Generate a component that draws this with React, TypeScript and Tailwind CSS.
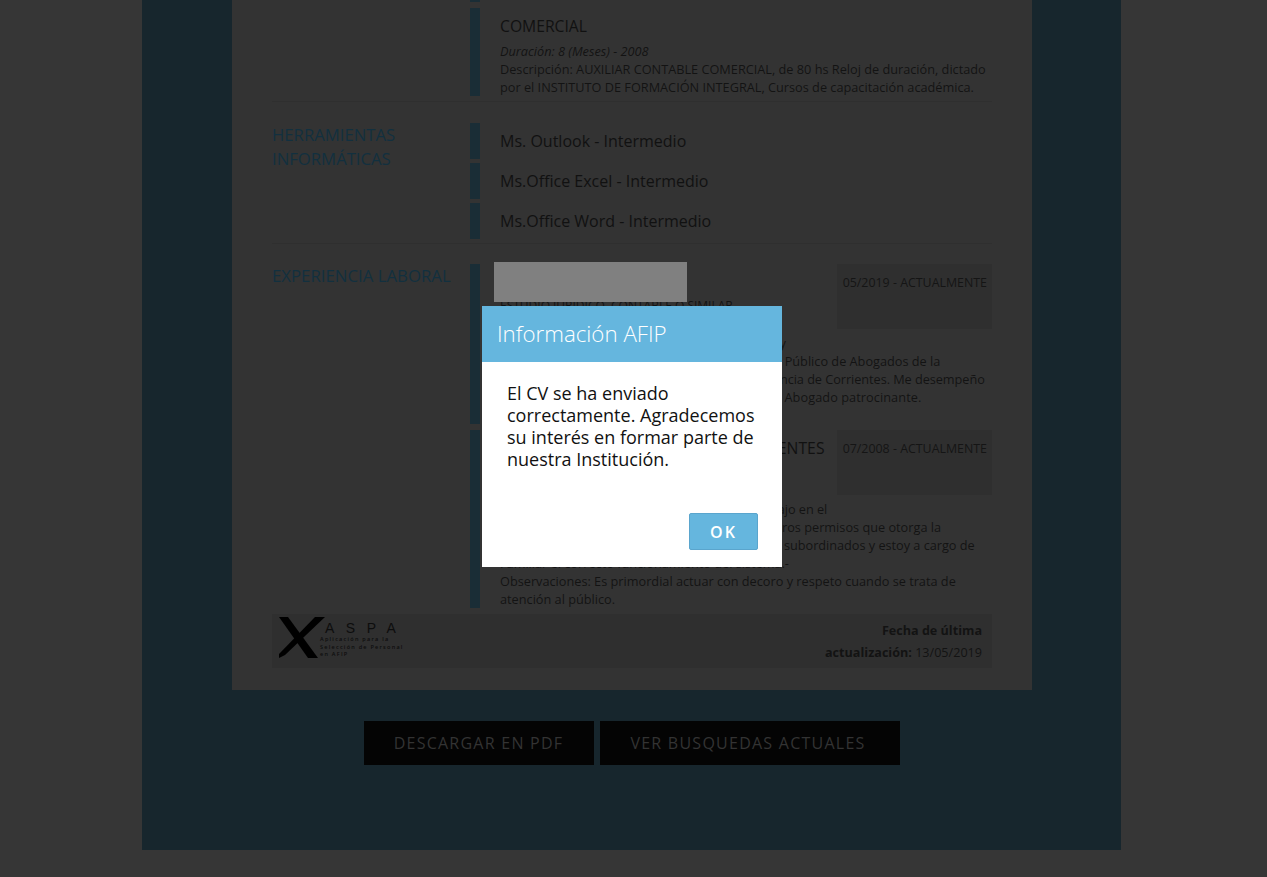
const Bar = ({ className = "" }: { className?: string }) => (
  <div className={`w-[10px] shrink-0 bg-[#1a2d36] ${className}`} />
);

const Line = ({ children, className = "" }: { children: React.ReactNode; className?: string }) => (
  <p className={`h-[18px] whitespace-nowrap text-[12.72px] leading-[18px] text-[#131313] ${className}`}>{children}</p>
);

const Tool = ({ children }: { children: React.ReactNode }) => (
  <div className="flex h-[36px]">
    <Bar />
    <p className="ml-[20px] text-[16px] leading-[36px] text-[#111111]">{children}</p>
  </div>
);

const DateBox = ({ children }: { children: React.ReactNode }) => (
  <div className="h-[65px] w-[155px] shrink-0 bg-[#2f2f2f] px-[5px] py-[10px] text-right text-[12.4px] leading-[18px] whitespace-nowrap text-[#151515]">
    {children}
  </div>
);

export default function App() {
  return (
    <div className="relative h-[877px] w-full overflow-hidden bg-[#363636] font-['Open_Sans',sans-serif]">
      <main className="ml-[142px] h-[850px] w-[979px] bg-[#17262d] px-[90px]">
        <section className="h-[690px] w-[800px] bg-[#333333] px-[40px]">
          <div className="flex h-[102px] border-b border-[#2f2f2f]">
            <div className="w-[198px] shrink-0" />
            <div className="flex flex-col gap-[6px]">
              <Bar className="h-[2px]" />
              <div className="flex h-[88px]">
                <Bar />
                <div className="ml-[20px]">
                  <h3 className="mb-[1px] text-[15.7px] leading-[36px] text-[#111111]">COMERCIAL</h3>
                  <Line className="-mt-[3px] italic">Duración: 8 (Meses) - 2008</Line>
                  <Line>Descripción: AUXILIAR CONTABLE COMERCIAL, de 80 hs Reloj de duración, dictado</Line>
                  <Line>por el INSTITUTO DE FORMACIÓN INTEGRAL, Cursos de capacitación académica.</Line>
                </div>
              </div>
            </div>
          </div>

          <div className="flex h-[142px] border-b border-[#2f2f2f] pt-[21px]">
            <h2 className="w-[198px] shrink-0 text-[16.7px] leading-[24px] text-[#12303f]">
              HERRAMIENTAS
              <br />
              INFORMÁTICAS
            </h2>
            <div className="flex flex-col gap-[4px]">
              <Tool>Ms. Outlook - Intermedio</Tool>
              <Tool>Ms.Office Excel - Intermedio</Tool>
              <Tool>Ms.Office Word - Intermedio</Tool>
            </div>
          </div>

          <div className="flex h-[370px] pt-[20px]">
            <h2 className="w-[198px] shrink-0 text-[16.8px] leading-[24px] whitespace-nowrap text-[#12303f]">EXPERIENCIA LABORAL</h2>
            <div className="flex flex-col gap-[6px]">
              <div className="flex h-[160px] w-[522px]">
                <Bar />
                <div className="ml-[20px] w-[492px]">
                  <div className="flex h-[65px] justify-end">
                    <DateBox>05/2019 - ACTUALMENTE</DateBox>
                  </div>
                  <Line className="-mt-[32px] text-[12px]!">ESTUDIO JURÍDICO, CONTABLE O SIMILAR</Line>
                  <Line className="mt-[19px]">Ejercicio profesional independiente en el fuero y</Line>
                  <Line>Matriculado en el Colegio de Abogados Consejo Público de Abogados de la</Line>
                  <Line className="tracking-[-0.05px]">Primera Circunscripción Judicial de toda la Provincia de Corrientes. Me desempeño</Line>
                  <Line className="tracking-[0.07px]">en el asesoramiento legal de los clientes, como Abogado patrocinante.</Line>
                </div>
              </div>
              <div className="flex h-[178px]">
                <Bar />
                <div className="ml-[20px] w-[492px]">
                  <div className="flex h-[65px] justify-between">
                    <h3 className="text-[15.7px] leading-[36px] tracking-[0.08px] whitespace-nowrap text-[#111111]">
                      SECRETARIO DEL TRIBUNAL DE CORRIENTES
                    </h3>
                    <DateBox>07/2008 - ACTUALMENTE</DateBox>
                  </div>
                  <Line className="mt-[5px] tracking-[-0.055px]">Me desempeño actualmente en mi sitio de trabajo en el</Line>
                  <Line>sector de personal, administrando licencias y otros permisos que otorga la</Line>
                  <Line className="tracking-[-0.025px]">La Institución. Coordino tareas con un grupo de subordinados y estoy a cargo de</Line>
                  <Line>Familiar el correcto funcionamiento del sistema.-</Line>
                  <Line>Observaciones: Es primordial actuar con decoro y respeto cuando se trata de</Line>
                  <Line>atención al público.</Line>
                </div>
              </div>
            </div>
          </div>

          <footer className="flex h-[54px] justify-between bg-[#2f2f2f] pr-[10px] pl-[7px]">
            <div className="flex items-start pt-[3px]">
              <svg width="46" height="42" viewBox="0 0 46 42" className="shrink-0" aria-hidden="true">
                <polygon fill="#000" points="0,0 9,0 39,41 29,41" />
                <polygon fill="#000" points="36,0 46,0 6,38 0,41 0,37" />
              </svg>
              <div className="-ml-[5px] w-[84px] pt-[3px] text-[#0d0d0d]">
                <p className="pl-[5px] font-['Liberation_Sans',sans-serif] text-[14px] leading-[16px] tracking-[11.5px] whitespace-nowrap">
                  ASPA
                </p>
                <p className="text-[5.5px] leading-[7.7px] font-semibold tracking-[1.25px] whitespace-nowrap">
                  Aplicación para la
                  <br />
                  Selección de Personal
                  <br />
                  en AFIP
                </p>
              </div>
            </div>
            <p className="w-[170px] pt-[6px] text-right text-[12.6px] leading-[22px] text-[#131313]">
              <b className="font-bold">Fecha de última actualización:</b> 13/05/2019
            </p>
          </footer>
        </section>

        <div className="mt-[31px] flex justify-center gap-[6px]">
          <a className="flex h-[44px] w-[230px] items-center justify-center bg-[#040404] text-[16px] tracking-[1.25px] text-[#333333]">
            DESCARGAR EN PDF
          </a>
          <a className="flex h-[44px] w-[300px] items-center justify-center bg-[#040404] pr-[3px] text-[16px] tracking-[1.25px] text-[#333333]">
            VER BUSQUEDAS ACTUALES
          </a>
        </div>
      </main>

      <div className="absolute top-[262px] left-[494px] h-[40px] w-[193px] bg-[#808080]" />

      <div className="absolute top-[306px] left-[482px] h-[261px] w-[300px] bg-white">
        <h1 className="h-[56px] bg-[#65b6de] pl-[15px] text-[22.3px] leading-[56px] font-light text-white">Información AFIP</h1>
        <p className="px-[25px] pt-[20px] text-[18px] leading-[22px] text-[#111111]">
          El CV se ha enviado correctamente. Agradecemos su interés en formar parte de nuestra Institución.
        </p>
        <button className="absolute top-[207px] left-[207px] h-[37px] w-[69px] rounded-[2px] border border-[#5aa5cd] bg-[#65b6de] text-[16px] font-semibold tracking-[2px] text-white">
          OK
        </button>
      </div>
    </div>
  );
}
